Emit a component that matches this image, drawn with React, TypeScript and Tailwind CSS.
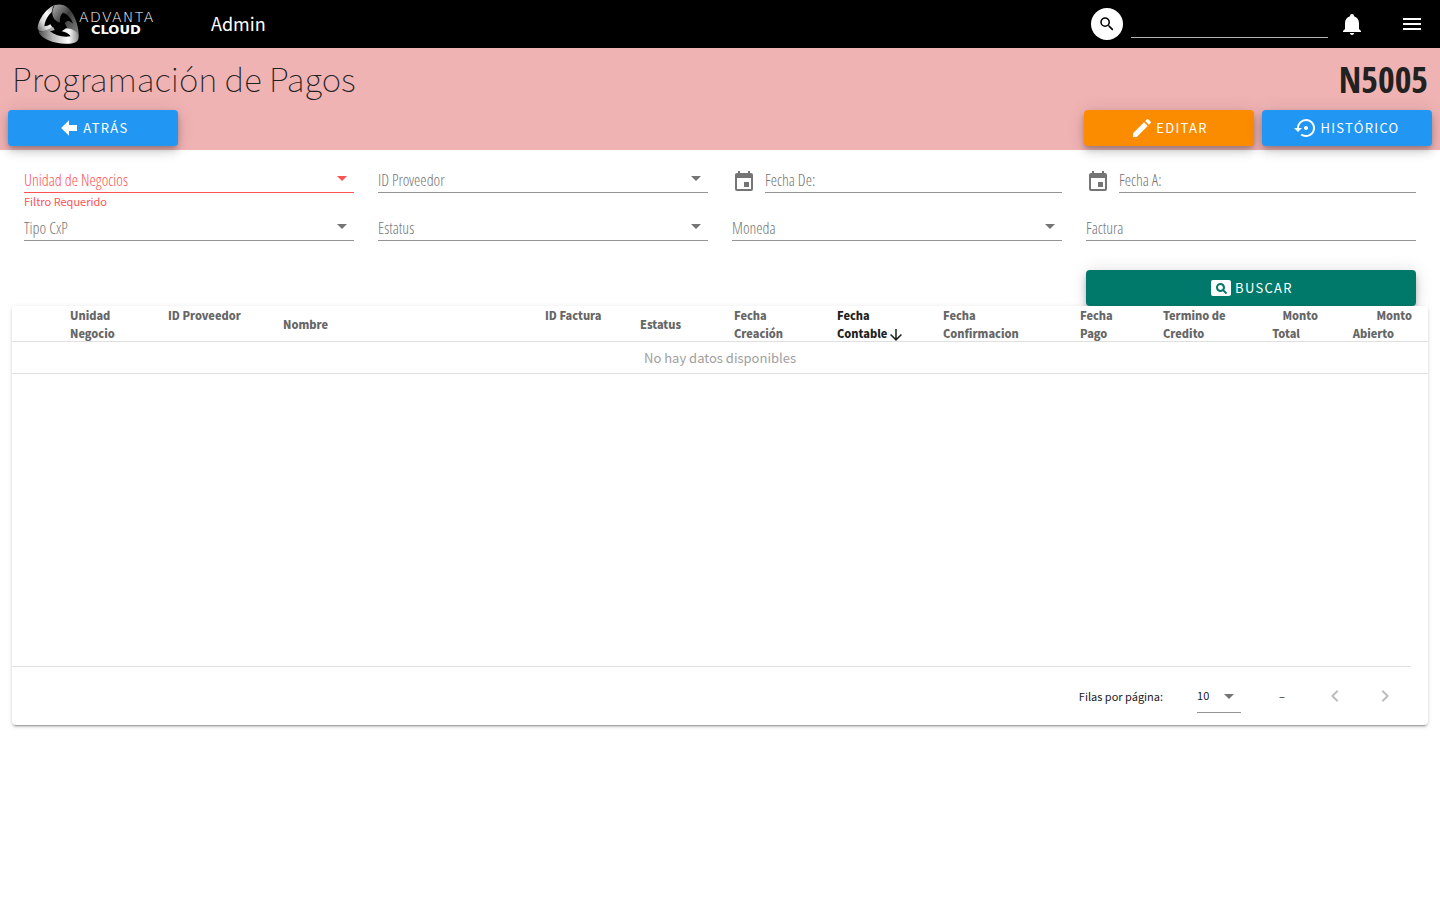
import React, { useId } from "react";
import { MdPageview, MdSettingsBackupRestore } from "react-icons/md";

const paths = {
  arrowLeft: "M20,9V15H12V19.84L4.16,12L12,4.16V9H20Z",
  pencil:
    "M20.71,7.04C21.1,6.65 21.1,6 20.71,5.63L18.37,3.29C18,2.9 17.35,2.9 16.96,3.29L15.12,5.12L18.87,8.87M3,17.25V21H6.75L17.81,9.93L14.06,6.18L3,17.25Z",
  bell: "M21,19V20H3V19L5,17V11C5,7.9 7.03,5.17 10,4.29C10,4.19 10,4.1 10,4A2,2 0 0,1 12,2A2,2 0 0,1 14,4C14,4.1 14,4.19 14,4.29C16.97,5.17 19,7.9 19,11V17L21,19M14,21A2,2 0 0,1 12,23A2,2 0 0,1 10,21",
  menu: "M3,6H21V8H3V6M3,11H21V13H3V11M3,16H21V18H3V16Z",
  magnify:
    "M9.5,3A6.5,6.5 0 0,1 16,9.5C16,11.11 15.41,12.59 14.44,13.73L14.71,14H15.5L20.5,19L19,20.5L14,15.5V14.71L13.73,14.44C12.59,15.41 11.11,16 9.5,16A6.5,6.5 0 0,1 3,9.5A6.5,6.5 0 0,1 9.5,3M9.5,5C7,5 5,7 5,9.5C5,12 7,14 9.5,14C12,14 14,12 14,9.5C14,7 12,5 9.5,5Z",
  calendar:
    "M19,19H5V8H19M16,1V3H8V1H6V3H5C3.89,3 3,3.89 3,5V19A2,2 0 0,0 5,21H19A2,2 0 0,0 21,19V5C21,3.89 20.1,3 19,3H18V1M17,12H12V17H17V12Z",
  arrowDown: "M11,4H13V16L18.5,10.5L19.92,11.92L12,19.84L4.08,11.92L5.5,10.5L11,16V4Z",
  menuDown: "M7,10L12,15L17,10H7Z",
  chevronLeft: "M15.41,16.58L10.83,12L15.41,7.41L14,6L8,12L14,18L15.41,16.58Z",
  chevronRight: "M8.59,16.58L13.17,12L8.59,7.41L10,6L16,12L10,18L8.59,16.58Z",
};

function Icon({ name, className = "size-6" }: { name: keyof typeof paths; className?: string }) {
  return (
    <svg viewBox="0 0 24 24" fill="currentColor" aria-hidden="true" className={className}>
      <path d={paths[name]} />
    </svg>
  );
}

function Logo() {
  return (
    <a href="#" aria-label="Advanta Cloud" className="flex items-center text-white">
      <svg viewBox="8 6 126 120" className="h-10 w-[42px]" aria-hidden="true">
        <defs>
          <linearGradient id="lgLeft" x1="0" y1="1" x2="1" y2="0">
            <stop offset="0" stopColor="#5a5a5a" />
            <stop offset="0.3" stopColor="#d8d8d8" />
            <stop offset="0.6" stopColor="#ffffff" />
            <stop offset="1" stopColor="#8a8a8a" />
          </linearGradient>
          <linearGradient id="lgRight" x1="0" y1="0" x2="1" y2="1">
            <stop offset="0" stopColor="#b0b0b0" />
            <stop offset="0.45" stopColor="#3c3c3c" />
            <stop offset="1" stopColor="#8c8c8c" />
          </linearGradient>
          <linearGradient id="lgBase" x1="0" y1="0" x2="1" y2="0">
            <stop offset="0" stopColor="#4a4a4a" />
            <stop offset="0.35" stopColor="#b5b5b5" />
            <stop offset="0.75" stopColor="#ffffff" />
            <stop offset="1" stopColor="#8a8a8a" />
          </linearGradient>
        </defs>
        <path
          fill="url(#lgLeft)"
          d="M64 8C40 14 12 50 10 78c0 6 4 10 12 10 12 0 24-4 32-12l-6-9c-6 4-12 6-18 6 2-16 10-32 22-42l4-17z"
        />
        <path
          fill="url(#lgRight)"
          d="M62 9c22-6 40 4 52 24 12 20 20 46 19 72-6-12-18-22-34-26l-8-16 9-7c8 2 12 5 16 9-4-14-14-28-30-33-9 8-10 18-9 30-14-4-22-14-23-28 0-10 3-18 8-25z"
        />
        <path
          fill="url(#lgBase)"
          d="M12 88c8 24 48 38 86 37 20 0 33-4 35-18 0-14-16-28-38-28l-13 9c12 2 22 7 27 15-22 4-46-2-62-15l14-4-5-10c-12 10-30 14-44 14z"
        />
      </svg>
      <span className="flex w-[95px] flex-col whitespace-nowrap font-['DejaVu_Sans'] text-[13px] leading-3">
        <span className="text-sm leading-3 font-extralight tracking-widest">ADVANTA</span>
        <span className="pl-3 leading-[14px] font-bold">CLOUD</span>
      </span>
    </a>
  );
}

function Field({
  label,
  kind,
  error,
}: {
  label: string;
  kind: "select" | "date" | "text";
  error?: string;
}) {
  const id = useId();
  const control = error
    ? "h-7 w-full appearance-none border-b border-[#ff5252] bg-transparent outline-none"
    : "h-7 w-full appearance-none border-b border-[#949494] bg-transparent outline-none";
  return (
    <div className={error ? "h-12 text-[#ff5252]" : "h-12 text-[#757575]"}>
      <div className="flex items-start">
        {kind === "date" && <Icon name="calendar" className="mr-[9px] mt-[5px] size-6 shrink-0" />}
        <div className="relative h-7 flex-1">
          {kind === "select" ? (
            <select id={id} className={control} defaultValue="">
              <option value="" />
            </select>
          ) : (
            <input id={id} type="text" className={control} />
          )}
          <label
            htmlFor={id}
            className="pointer-events-none absolute top-[3px] left-0 font-['Open_Sans_Condensed_Light','Open_Sans_Condensed','Open_Sans',sans-serif] text-base leading-6 font-light"
          >
            {label}
          </label>
          {kind === "select" && (
            <Icon name="menuDown" className="pointer-events-none absolute right-0 top-px size-6" />
          )}
        </div>
      </div>
      {error && <p className="pt-[2px] text-[11px] leading-3">{error}</p>}
    </div>
  );
}

function ActionButton({ className, children }: { className: string; children: React.ReactNode }) {
  return (
    <button
      type="button"
      className={`flex h-9 items-center justify-center gap-[2px] rounded text-[13px] tracking-widest text-white shadow-[0_3px_5px_-1px_rgba(0,0,0,0.2),0_6px_10px_0_rgba(0,0,0,0.14),0_1px_18px_0_rgba(0,0,0,0.12)] ${className}`}
    >
      {children}
    </button>
  );
}

const columns = [
  { title: "Unidad Negocio", width: "w-[98px]" },
  { title: "ID Proveedor", width: "w-[115px]" },
  { title: "Nombre", width: "w-auto" },
  { title: "ID Factura", width: "w-[95px]" },
  { title: "Estatus", width: "w-[94px]" },
  { title: "Fecha Creación", width: "w-[103px]" },
  { title: "Fecha Contable", width: "w-[106px]", sorted: true },
  { title: "Fecha Confirmacion", width: "w-[137px]" },
  { title: "Fecha Pago", width: "w-[83px]" },
  { title: "Termino de Credito", width: "w-[110px]" },
  { title: "Monto Total", width: "w-[77px]", right: true },
  { title: "Monto Abierto", width: "w-[94px]", right: true },
];

function PaymentsTable() {
  return (
    <section className="relative mx-3 rounded bg-white shadow-[0_3px_1px_-2px_rgba(0,0,0,0.2),0_2px_2px_0_rgba(0,0,0,0.14),0_1px_5px_0_rgba(0,0,0,0.12)]">
      <div className="min-h-[360px]">
        <table className="w-full table-fixed border-collapse">
          <colgroup>
            <col className="w-[42px]" />
            {columns.map((c) => (
              <col key={c.title} className={c.width} />
            ))}
          </colgroup>
          <thead>
            <tr className="shadow-[inset_0_-1px_0_#e0e0e0]">
              <td />
              {columns.map((c) => (
                <th
                  key={c.title}
                  scope="col"
                  aria-sort={c.sorted ? "descending" : undefined}
                  className={c.right ? "pr-4 pl-3 text-right" : "pr-3 pl-4 text-left"}
                >
                  <button
                    type="button"
                    className={`block w-full text-[11px] leading-[18px] font-black ${
                      c.right ? "text-right" : "text-left"
                    } ${c.sorted ? "text-[#1f1f1f]" : "text-[#666666]"}`}
                  >
                    {c.title}
                    <Icon
                      name="arrowDown"
                      className={
                        c.sorted
                          ? "-my-1 inline-block size-[18px] align-middle"
                          : "-my-1 inline-block size-[18px] align-middle opacity-0"
                      }
                    />
                  </button>
                </th>
              ))}
            </tr>
          </thead>
          <tbody>
            <tr className="shadow-[inset_0_-1px_0_#e0e0e0]">
              <td colSpan={13} className="h-8 pb-px text-center text-[13px] leading-5 text-[#9e9e9e]">
                No hay datos disponibles
              </td>
            </tr>
          </tbody>
        </table>
      </div>
      <footer className="mr-[17px] flex h-[59px] items-center justify-end border-t border-[#e0e0e0] pr-2 text-[11px] text-[#212121]">
        <label htmlFor="rows">Filas por página:</label>
        <div className="relative ml-[34px] mt-[2px] w-11">
          <select
            id="rows"
            defaultValue="10"
            className="h-8 w-full appearance-none border-b border-[#949494] bg-transparent pb-[2px] text-[11px] outline-none"
          >
            <option>10</option>
          </select>
          <Icon
            name="menuDown"
            className="pointer-events-none absolute right-0 top-[3px] size-6 text-[#757575]"
          />
        </div>
        <span className="ml-[38px] mr-8">–</span>
        <button type="button" aria-label="Página anterior" className="p-1.5 text-[#bdbdbd]">
          <Icon name="chevronLeft" />
        </button>
        <button type="button" aria-label="Página siguiente" className="ml-[14px] p-1.5 text-[#bdbdbd]">
          <Icon name="chevronRight" />
        </button>
      </footer>
    </section>
  );
}

export default function App() {
  return (
    <div className="min-h-screen bg-white font-['Noto_Sans_CJK_JP',sans-serif] text-[#212121]">
      <header className="flex h-12 items-center bg-black pl-[37px] pr-4 text-white">
        <Logo />
        <span className="ml-[37px] pb-[2px] text-lg">Admin</span>
        <div className="ml-auto flex items-center">
          <button
            type="button"
            aria-label="Buscar"
            className="flex size-8 items-center justify-center rounded-full bg-white text-black"
          >
            <Icon name="magnify" className="size-[18px]" />
          </button>
          <input
            type="text"
            aria-label="Texto de búsqueda"
            className="ml-2 h-7 w-[197px] border-b border-[#b3b3b3] bg-transparent outline-none"
          />
          <button type="button" aria-label="Notificaciones" className="ml-3">
            <Icon name="bell" />
          </button>
          <button type="button" aria-label="Menú" className="ml-9">
            <Icon name="menu" />
          </button>
        </div>
      </header>

      <div className="bg-[#f0b3b4] px-2 pb-1">
        <div className="flex h-[62px] items-center justify-between px-1">
          <h1 className="pb-[2px] text-[33px] leading-10 font-thin">Programación de Pagos</h1>
          <span className="pt-[2px] font-['Open_Sans_Condensed','Open_Sans',sans-serif] text-4xl font-bold">
            N5005
          </span>
        </div>
        <div className="flex gap-2">
          <ActionButton className="w-[170px] bg-[#2196f3]">
            <Icon name="arrowLeft" />
            ATRÁS
          </ActionButton>
          <ActionButton className="ml-auto w-[170px] bg-[#fb8c00]">
            <Icon name="pencil" />
            EDITAR
          </ActionButton>
          <ActionButton className="w-[170px] bg-[#2196f3]">
            <MdSettingsBackupRestore className="size-6" aria-hidden="true" />
            HISTÓRICO
          </ActionButton>
        </div>
      </div>

      <form className="grid grid-cols-4 gap-x-6 px-6 pt-[15px]">
        <Field label="Unidad de Negocios" kind="select" error="Filtro Requerido" />
        <Field label="ID Proveedor" kind="select" />
        <Field label="Fecha De:" kind="date" />
        <Field label="Fecha A:" kind="date" />
        <Field label="Tipo CxP" kind="select" />
        <Field label="Estatus" kind="select" />
        <Field label="Moneda" kind="select" />
        <Field label="Factura" kind="text" />
        <ActionButton className="col-start-4 mt-[9px] bg-[#00796b]">
          <MdPageview className="size-6" aria-hidden="true" />
          BUSCAR
        </ActionButton>
      </form>

      <PaymentsTable />
    </div>
  );
}
